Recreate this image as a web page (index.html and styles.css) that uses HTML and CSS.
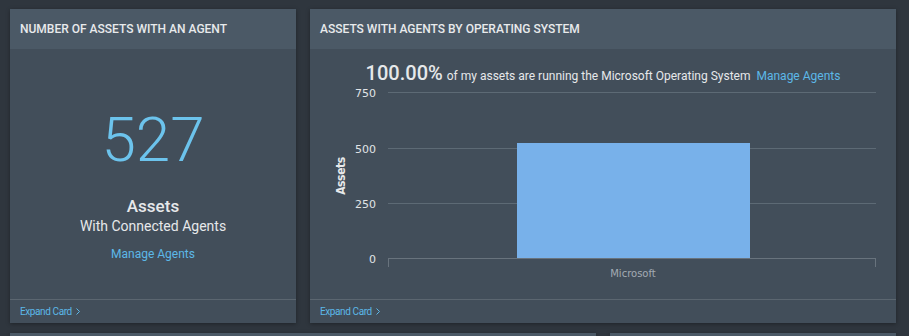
FILE: index.html
```html
<!DOCTYPE html>
<html lang="en">
<head>
    <meta charset="UTF-8">
    <meta name="viewport" content="width=device-width, initial-scale=1.0">
    <title>Agent Dashboard</title>
    <link rel="stylesheet" href="styles.css">
</head>
<body>
    <div class="row row-top">
        <div class="card">
            <div class="card-header">Number of Assets with an Agent</div>
            <div class="card-body count-body">
                <div class="big-number">527</div>
                <div class="count-label">Assets</div>
                <div class="count-sub">With Connected Agents</div>
                <a class="link count-link" href="#">Manage Agents</a>
            </div>
            <div class="card-footer">
                <a class="expand" href="#">Expand Card
                    <svg class="chevron" width="4" height="7" viewBox="0 0 4 7"><polyline points="0.5,0.5 3.5,3.5 0.5,6.5" fill="none" stroke="#5cb8e8" stroke-width="1"/></svg>
                </a>
            </div>
        </div>

        <div class="card">
            <div class="card-header">Assets with Agents by Operating System</div>
            <div class="card-body chart-body">
                <div class="summary">
                    <span class="percent">100.00%</span>
                    <span class="summary-text">of my assets are running the Microsoft Operating System</span>
                    <a class="link" href="#">Manage Agents</a>
                </div>
                <svg class="chart" width="586" height="205" viewBox="0 0 586 205">
                    <g stroke="#5d6a75" stroke-width="1">
                        <line x1="78" y1="7.5" x2="566" y2="7.5"/>
                        <line x1="78" y1="63.5" x2="566" y2="63.5"/>
                        <line x1="78" y1="118.5" x2="566" y2="118.5"/>
                    </g>
                    <rect x="207" y="58" width="233" height="116" fill="#78b1ea"/>
                    <g stroke="#68737d" stroke-width="1">
                        <line x1="78" y1="173.5" x2="566" y2="173.5"/>
                        <line x1="78.5" y1="173" x2="78.5" y2="182"/>
                        <line x1="565.5" y1="173" x2="565.5" y2="182"/>
                    </g>
                    <g class="y-labels" text-anchor="end">
                        <text x="66" y="12">750</text>
                        <text x="66" y="68">500</text>
                        <text x="66" y="123">250</text>
                        <text x="66" y="178">0</text>
                    </g>
                    <text class="y-title" x="0" y="0" transform="translate(35 91) rotate(-90)" text-anchor="middle">Assets</text>
                    <text class="x-label" x="323" y="192" text-anchor="middle">Microsoft</text>
                </svg>
            </div>
            <div class="card-footer">
                <a class="expand" href="#">Expand Card
                    <svg class="chevron" width="4" height="7" viewBox="0 0 4 7"><polyline points="0.5,0.5 3.5,3.5 0.5,6.5" fill="none" stroke="#5cb8e8" stroke-width="1"/></svg>
                </a>
            </div>
        </div>
    </div>

    <div class="row row-bottom">
        <div class="card card-stub"></div>
        <div class="card card-stub"></div>
    </div>
</body>
</html>
```

FILE: styles.css
```css
body {
    margin: 0;
    padding: 9px 13px 0 10px;
    background-color: #2f363e;
    font-family: Roboto, "Liberation Sans", sans-serif;
    color: #e6e8ea;
    overflow: hidden;
    height: 336px;
    box-sizing: border-box;
}
.row {
    display: grid;
    column-gap: 14px;
}
.row-top {
    grid-template-columns: 286px 586px;
}
.row-bottom {
    grid-template-columns: 586px 286px;
    margin-top: 10px;
}
.card {
    background: #424e5a;
    box-shadow: 0 1px 4px rgba(0,0,0,0.35);
    display: flex;
    flex-direction: column;
}
.card-stub {
    background: #4b5966;
    height: 3px;
}
.card-header {
    background: #4b5966;
    height: 40px;
    padding: 0 10px;
    display: flex;
    align-items: center;
    font-size: 12px;
    font-weight: 500;
    text-transform: uppercase;
    color: #e8eaec;
}
.card-body {
    height: 250px;
    box-sizing: border-box;
}
.count-body {
    display: flex;
    flex-direction: column;
    align-items: center;
    padding-top: 60px;
}
.big-number {
    font-size: 62px;
    font-weight: 300;
    line-height: 62px;
    color: #6cc3ec;
}
.count-label {
    margin-top: 25px;
    font-size: 17px;
    font-weight: 500;
    line-height: 20px;
}
.count-sub {
    margin-top: 1px;
    font-size: 14px;
    line-height: 18px;
}
.link {
    color: #5cb8e8;
    font-size: 12px;
    text-decoration: none;
}
.count-link {
    margin-top: 11px;
    line-height: 16px;
}
.chart-body {
    padding-top: 12px;
}
.summary {
    display: flex;
    justify-content: center;
    align-items: baseline;
    gap: 4px;
    height: 24px;
    line-height: 24px;
}
.percent {
    font-size: 20px;
    font-weight: 500;
}
.summary-text {
    font-size: 12px;
    margin-right: 2px;
}
.chart {
    display: block;
}
.y-labels {
    font-family: "DejaVu Sans", sans-serif;
    font-size: 11px;
    fill: #e0e3e6;
}
.y-title {
    font-family: "DejaVu Sans Condensed", "DejaVu Sans", sans-serif;
    font-size: 12px;
    font-weight: bold;
    letter-spacing: -0.4px;
    fill: #e6e8ea;
}
.x-label {
    font-family: "DejaVu Sans", sans-serif;
    font-size: 10px;
    fill: #a3abb3;
}
.card-footer {
    border-top: 1px solid #5b6670;
    height: 23px;
    padding: 0 10px;
    display: flex;
    align-items: center;
}
.expand {
    color: #5cb8e8;
    font-size: 10px;
    letter-spacing: -0.4px;
    text-decoration: none;
    display: flex;
    align-items: center;
    gap: 4px;
}
.chevron {
    display: block;
}
```
